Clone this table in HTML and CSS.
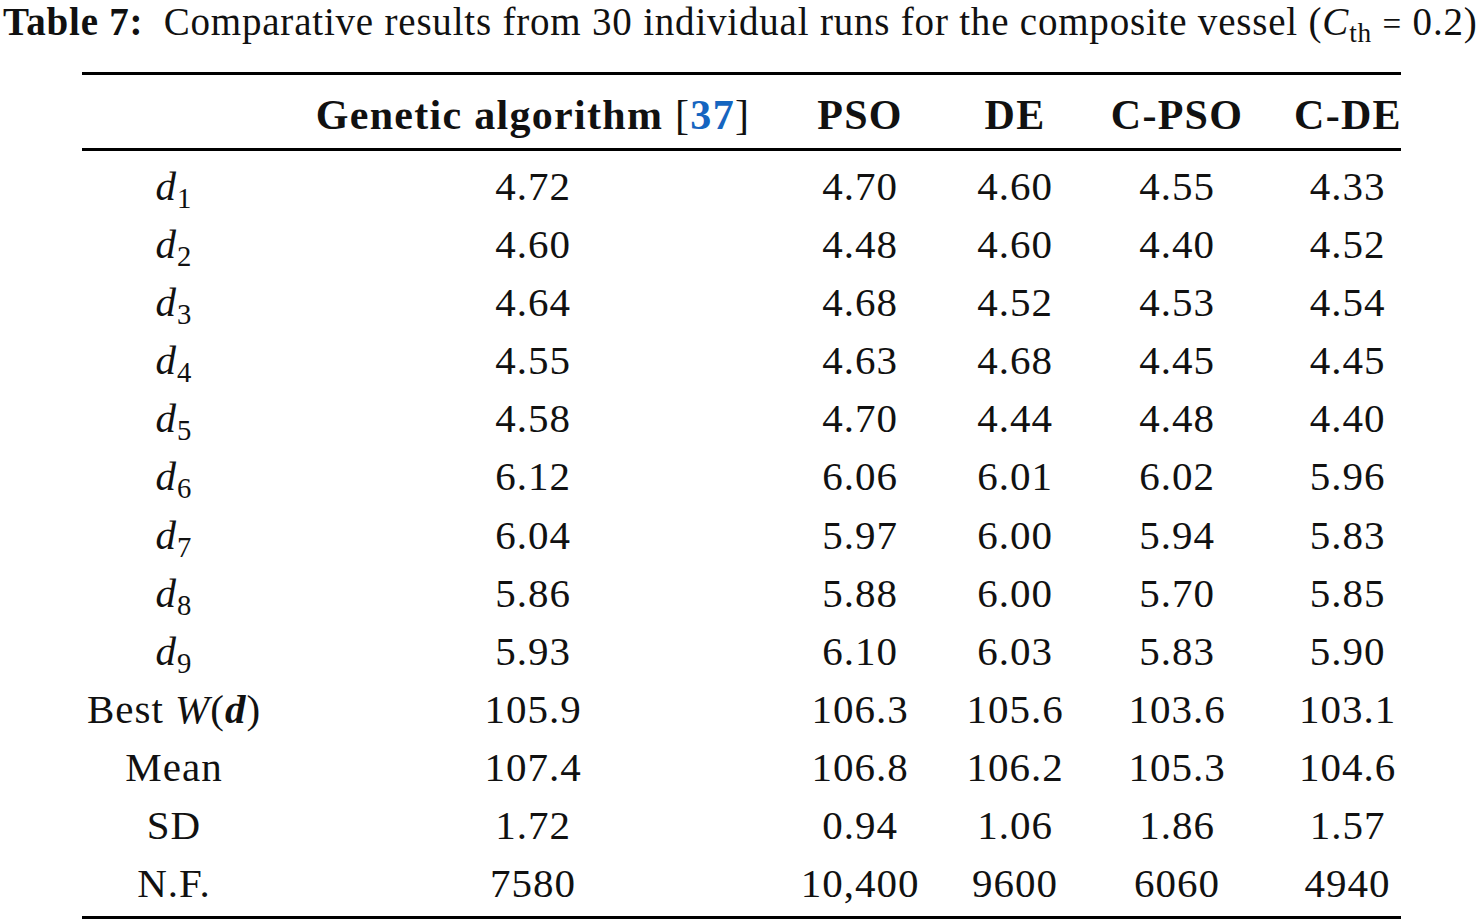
FILE: index.html
```html
<!DOCTYPE html>
<html>
<head>
<meta charset="utf-8">
<link rel="stylesheet" href="styles.css">
</head>
<body>
<div class="caption"><b>Table 7:</b>&ensp;Comparative results from 30 individual runs for the composite vessel (<i>C</i><sub>th</sub> <span class="eq">=</span> 0.2)</div>
<table class="results">
<colgroup>
<col class="c1"><col class="c2"><col class="c3"><col class="c4"><col class="c5"><col class="c6">
</colgroup>
<thead>
<tr><th></th><th>Genetic algorithm <span class="br">[</span><span class="ref">37</span><span class="br">]</span></th><th>PSO</th><th>DE</th><th>C-PSO</th><th class="last">C-DE</th></tr>
</thead>
<tbody>
<tr class="first"><td class="lab"><i>d</i><sub>1</sub></td><td>4.72</td><td>4.70</td><td>4.60</td><td>4.55</td><td class="last">4.33</td></tr>
<tr><td class="lab"><i>d</i><sub>2</sub></td><td>4.60</td><td>4.48</td><td>4.60</td><td>4.40</td><td class="last">4.52</td></tr>
<tr><td class="lab"><i>d</i><sub>3</sub></td><td>4.64</td><td>4.68</td><td>4.52</td><td>4.53</td><td class="last">4.54</td></tr>
<tr><td class="lab"><i>d</i><sub>4</sub></td><td>4.55</td><td>4.63</td><td>4.68</td><td>4.45</td><td class="last">4.45</td></tr>
<tr><td class="lab"><i>d</i><sub>5</sub></td><td>4.58</td><td>4.70</td><td>4.44</td><td>4.48</td><td class="last">4.40</td></tr>
<tr><td class="lab"><i>d</i><sub>6</sub></td><td>6.12</td><td>6.06</td><td>6.01</td><td>6.02</td><td class="last">5.96</td></tr>
<tr><td class="lab"><i>d</i><sub>7</sub></td><td>6.04</td><td>5.97</td><td>6.00</td><td>5.94</td><td class="last">5.83</td></tr>
<tr><td class="lab"><i>d</i><sub>8</sub></td><td>5.86</td><td>5.88</td><td>6.00</td><td>5.70</td><td class="last">5.85</td></tr>
<tr><td class="lab"><i>d</i><sub>9</sub></td><td>5.93</td><td>6.10</td><td>6.03</td><td>5.83</td><td class="last">5.90</td></tr>
<tr><td class="lab">Best <i>W</i>(<b><i>d</i></b>)</td><td>105.9</td><td>106.3</td><td>105.6</td><td>103.6</td><td class="last">103.1</td></tr>
<tr><td class="lab">Mean</td><td>107.4</td><td>106.8</td><td>106.2</td><td>105.3</td><td class="last">104.6</td></tr>
<tr><td class="lab">SD</td><td>1.72</td><td>0.94</td><td>1.06</td><td>1.86</td><td class="last">1.57</td></tr>
<tr class="final"><td class="lab">N.F.</td><td>7580</td><td>10,400</td><td>9600</td><td>6060</td><td class="last">4940</td></tr>
</tbody>
</table>
</body>
</html>
```
FILE: styles.css
```css
html, body {
  margin: 0;
  padding: 0;
  background: #ffffff;
  color: #111111;
  font-family: "Liberation Serif", "Times New Roman", serif;
}
.caption {
  font-size: 39px;
  letter-spacing: 0.8px;
  line-height: 43.5px;
  padding-left: 3px;
  height: 72px;
  white-space: nowrap;
}
.caption b {
  font-weight: bold;
}
.caption sub {
  font-size: 0.7em;
  vertical-align: -0.25em;
  line-height: 0;
}
.caption .eq {
  font-size: 0.85em;
}
.results {
  margin-left: 82px;
  width: 1319px;
  table-layout: fixed;
  border-collapse: collapse;
  border-top: 3px solid #000;
  border-bottom: 3px solid #000;
  font-size: 41px;
  letter-spacing: 1px;
}
.results col.c1 { width: 184px; }
.results col.c2 { width: 534px; }
.results col.c3 { width: 120px; }
.results col.c4 { width: 190px; }
.results col.c5 { width: 134px; }
.results col.c6 { width: 157px; }
.results th, .results td {
  padding: 0;
  text-align: center;
  white-space: nowrap;
  font-weight: normal;
}
.results thead th {
  font-weight: bold;
  font-size: 42px;
  letter-spacing: 1.3px;
  line-height: 66px;
  padding-top: 7px;
  border-bottom: 3px solid #000;
}
.results thead .br {
  font-weight: normal;
}
.results thead .ref {
  color: #1565c0;
}
.results td {
  line-height: 58.1px;
}
.results .last {
  padding-left: 50px;
}
.results tr.first td {
  padding-top: 6px;
}
.results tr.final td {
  padding-bottom: 4px;
}
.results sub {
  font-size: 0.7em;
  vertical-align: -0.28em;
  line-height: 0;
}
```
